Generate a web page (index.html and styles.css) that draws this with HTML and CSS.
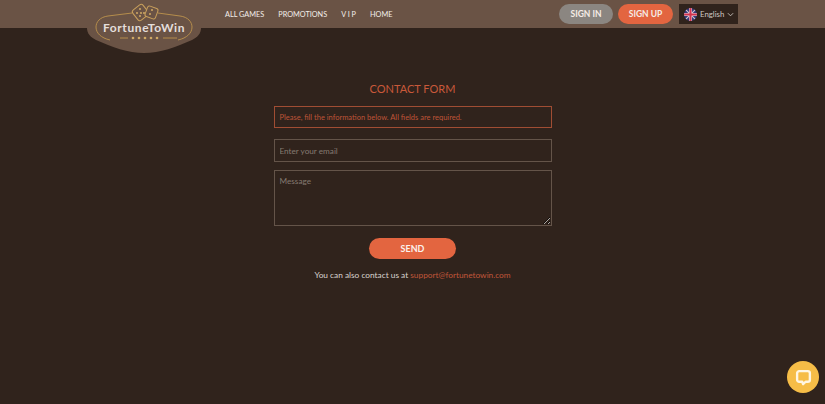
FILE: index.html
```html
<!DOCTYPE html>
<html lang="en">
<head>
<meta charset="utf-8">
<title>Contact Form</title>
<link rel="stylesheet" href="styles.css">
</head>
<body>
<header class="topbar">
  <a class="logo" href="#">
    <svg class="logo-art" viewBox="0 0 116 54" width="116" height="54" aria-hidden="true">
      <path class="logo-plate" d="M1 0H115V28C115 33 112 37 106 40C90 47 74 53 58 53C42 53 26 47 10 40C4 37 1 33 1 28Z"/>
      <path class="logo-ring" d="M46 13L22 16C14 17 10 22 10 27C10 33 15 38 24 40M72 13L94 16C102 17 106 22 106 27C106 33 101 38 92 40"/>
      <path class="logo-ring" d="M34 38H42M77 38H91"/>
      <rect class="logo-die" x="48" y="6" width="13" height="13" rx="2.500" transform="rotate(-38 54.500 12.500)"/>
      <rect class="logo-die" x="60" y="7" width="11" height="11" rx="2" transform="rotate(20 65.500 12.500)"/>
      <g class="logo-pip"><circle cx="54" cy="9" r="1"/><circle cx="51" cy="13" r="1"/><circle cx="55" cy="13" r="1"/><circle cx="58" cy="13" r="1"/><circle cx="54" cy="16" r="1"/><circle cx="66" cy="10" r="1"/><circle cx="64" cy="14" r="1"/></g>
      <g class="logo-pip"><circle cx="47" cy="38" r="1.300"/><circle cx="53" cy="38" r="1.300"/><circle cx="59" cy="38" r="1.300"/><circle cx="65" cy="38" r="1.300"/><circle cx="71" cy="38" r="1.300"/></g>
    </svg>
    <span class="logo-text">FortuneToWin</span>
  </a>
  <nav class="nav">
    <a href="#">ALL GAMES</a>
    <a href="#">PROMOTIONS</a>
    <a href="#">V I P</a>
    <a href="#">HOME</a>
  </nav>
  <div class="actions">
    <a class="pill pill-grey" href="#">SIGN IN</a>
    <a class="pill pill-orange" href="#">SIGN UP</a>
    <button class="lang" type="button">
      <svg class="flag" viewBox="0 0 14 14" width="13" height="13" aria-hidden="true">
        <defs><clipPath id="flag-clip"><circle cx="7" cy="7" r="7"/></clipPath></defs>
        <g clip-path="url(#flag-clip)">
          <rect width="14" height="14" fill="#343a78"/>
          <path d="M0 0L14 14M14 0L0 14" stroke="#cfc3d2" stroke-width="1.300"/>
          <path d="M7 0V14M0 7H14" stroke="#e0d4de" stroke-width="3.200"/>
          <path d="M7 0V14M0 7H14" stroke="#d2334f" stroke-width="2.200"/>
        </g>
      </svg>
      <span>English</span>
      <svg class="chev" viewBox="0 0 8 5" width="7" height="5" aria-hidden="true"><path d="M1 1l3 3 3-3"/></svg>
    </button>
  </div>
</header>

<main class="content">
  <h1 class="title">CONTACT FORM</h1>
  <form class="form">
    <p class="notice">Please, fill the information below. All fields are required.</p>
    <input class="field field-email" type="email" placeholder="Enter your email">
    <textarea class="field field-message" placeholder="Message"></textarea>
    <button class="send" type="button">SEND</button>
  </form>
  <p class="contact">You can also contact us at <a href="#">support@fortunetowin.com</a></p>
</main>

<button class="chat" type="button" aria-label="Chat">
  <svg viewBox="0 0 20 20" width="17" height="17" aria-hidden="true"><path d="M5 2.500H15A2.500 2.500 0 0 1 17.500 5V12.500A2.500 2.500 0 0 1 15 15H12.500L9.500 17.800L8.500 15H5A2.500 2.500 0 0 1 2.500 12.500V5A2.500 2.500 0 0 1 5 2.500Z"/></svg>
</button>
</body>
</html>
```

FILE: styles.css
```css
* { box-sizing: border-box; }

html, body { height: 100%; }

body {
  margin: 0;
  background: #30231c;
  color: #f1ebe6;
  font-family: "Lato", "Noto Sans", sans-serif;
  overflow: hidden;
}

a { text-decoration: none; color: inherit; }

.topbar {
  height: 28px;
  background: #6a5345;
  display: flex;
  align-items: center;
  padding-left: 225px;
}

.logo {
  position: absolute;
  left: 86px;
  top: 0;
  width: 116px;
  height: 54px;
}

.logo-art { display: block; }
.logo-plate { fill: #6a5345; }
.logo-ring { fill: none; stroke: #b58d4c; stroke-width: 1; }
.logo-die { fill: #6a5345; stroke: #c9a05c; stroke-width: 1; }
.logo-pip { fill: #d0a964; }

.logo-text {
  position: absolute;
  left: 0;
  right: 0;
  top: 20px;
  text-align: center;
  font-size: 12px;
  line-height: 16px;
  font-weight: 700;
  letter-spacing: 0.600px;
  color: #e4dedb;
}

.nav {
  display: flex;
  gap: 14px;
  font-size: 7.300px;
  font-weight: 400;
  color: #f3eeea;
}

.actions {
  margin-left: auto;
  margin-right: 87px;
  display: flex;
  align-items: center;
  gap: 5px;
}

.pill {
  height: 20px;
  border-radius: 10px;
  display: flex;
  align-items: center;
  justify-content: center;
  font-size: 8.500px;
  font-weight: 700;
  color: #f5ece6;
}

.pill-grey { width: 54px; background: #8b8681; }
.pill-orange { width: 55px; background: #e36540; }

.lang {
  margin-left: 1px;
  width: 59px;
  height: 20px;
  padding: 0 0 0 5px;
  border: 0;
  background: #30231c;
  color: #cfc9c4;
  font: 400 7.800px "Lato", "Noto Sans", sans-serif;
  display: flex;
  align-items: center;
  gap: 3px;
}

.flag { flex: none; }
.chev { fill: none; stroke: #cfc9c4; stroke-width: 1; margin-left: 0; }

.content {
  display: flex;
  flex-direction: column;
  align-items: center;
  padding-top: 53px;
}

.title {
  margin: 0 0 10px;
  font-size: 11px;
  line-height: 15px;
  font-weight: 400;
  color: #c9593a;
}

.form {
  width: 278px;
  display: flex;
  flex-direction: column;
  align-items: center;
}

.notice {
  width: 100%;
  height: 22px;
  margin: 0 0 11px;
  padding: 0 5px;
  border: 1px solid #a04d33;
  display: flex;
  align-items: center;
  font-size: 7.500px;
  color: #bf5438;
}

.field {
  display: block;
  width: 100%;
  background: transparent;
  border: 1px solid #645449;
  border-radius: 0;
  padding: 0 5px;
  color: #cfc9c4;
  font: 400 8.200px "Lato", "Noto Sans", sans-serif;
  outline: 0;
}

.field::placeholder { color: #857a71; opacity: 1; }

.field-email { height: 23px; margin-bottom: 8px; }
.field-message { height: 56px; padding-top: 5px; margin-bottom: 12px; resize: vertical; }

.send {
  width: 87px;
  height: 21px;
  border: 0;
  border-radius: 11px;
  background: #e36540;
  color: #fbf1ec;
  font: 700 9px "Lato", "Noto Sans", sans-serif;
  padding: 0;
}

.contact {
  margin: 10px 0 0;
  font-size: 8.300px;
  line-height: 12px;
  color: #d9d3cf;
}

.contact a { color: #c0563a; }

.chat {
  position: absolute;
  right: 6px;
  bottom: 11px;
  width: 32px;
  height: 32px;
  padding: 0;
  border: 0;
  border-radius: 50%;
  background: #f6bd47;
  display: flex;
  align-items: center;
  justify-content: center;
}

.chat path { fill: none; stroke: #fff6e3; stroke-width: 2.800; stroke-linejoin: round; }
```
